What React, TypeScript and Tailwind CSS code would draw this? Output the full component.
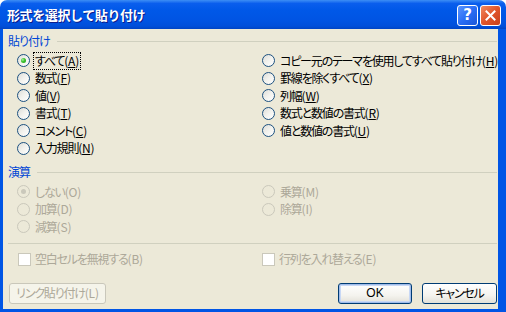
import React from "react";

const FONT = "[font-family:'Noto_Sans_CJK_JP','Noto_Sans',sans-serif] [font-feature-settings:'palt']";

function Label({ text, acc, disabled }: { text: string; acc: string; disabled?: boolean }) {
  return (
    <span className={"whitespace-nowrap leading-none " + (disabled ? "text-[#ACA899]" : "text-black")}>
      <span className="tracking-[-1.2px]">{text}</span>
      <span className="tracking-[-0.2px]">
        (
        {disabled ? acc : <span className="underline underline-offset-[1px]">{acc}</span>})
      </span>
    </span>
  );
}

function Radio({ checked, disabled }: { checked?: boolean; disabled?: boolean }) {
  if (disabled) {
    return (
      <span className="relative w-[13px] h-[13px] shrink-0 rounded-full border border-[#CAC8BB] bg-[#ECE9D8] flex items-center justify-center">
        {checked && <span className="w-[5px] h-[5px] rounded-full bg-[#CAC8BB]" />}
      </span>
    );
  }
  return (
    <span className="relative w-[13px] h-[13px] shrink-0 rounded-full border border-[#1C5180] bg-[linear-gradient(135deg,#DCDCD7_0%,#F2F2EE_50%,#FFFFFF_100%)] flex items-center justify-center">
      {checked && (
        <span className="w-[5px] h-[5px] rounded-full bg-[radial-gradient(circle_at_35%_35%,#A8F0A0_0%,#38C028_45%,#21A121_100%)]" />
      )}
    </span>
  );
}

function RadioRow({
  text,
  acc,
  checked,
  disabled,
  focus,
}: {
  text: string;
  acc: string;
  checked?: boolean;
  disabled?: boolean;
  focus?: boolean;
}) {
  return (
    <div className="h-[17.5px] flex items-center">
      <Radio checked={checked} disabled={disabled} />
      <span
        className={
          "ml-[3px] pl-[1px] pr-[1px] py-[2px] flex items-center " +
          (focus ? "border border-dotted border-black" : "border border-transparent")
        }
      >
        <Label text={text} acc={acc} disabled={disabled} />
      </span>
    </div>
  );
}

function CheckRow({ text, acc }: { text: string; acc: string }) {
  return (
    <div className="h-[15px] flex items-center">
      <span className="w-[13px] h-[13px] shrink-0 border border-[#CAC8BB] bg-white" />
      <span className="ml-[4px]">
        <Label text={text} acc={acc} disabled />
      </span>
    </div>
  );
}

function GroupHeader({ title }: { title: string }) {
  return (
    <div className="h-[12px] flex items-center pl-[5px] pr-[1px]">
      <span className="text-[#0046D5] leading-none whitespace-nowrap tracking-[-1px]">{title}</span>
      <span className="ml-[7px] flex-1 h-px bg-[#D0D0BF]" />
    </div>
  );
}

export default function App() {
  return (
    <div className={"w-[506px] h-[312px] flex flex-col text-[12px] " + FONT}>
      {/* Title bar */}
      <div className="h-[29px] shrink-0 rounded-t-[7px] flex items-center pl-[7px] pr-[5px] bg-[linear-gradient(to_bottom,#3D8EF5_0%,#0A5EED_12%,#0058E8_35%,#0054E3_70%,#004FDA_90%,#0044C4_100%)]">
        <span className="text-white font-bold text-[13px] tracking-[-0.4px] [text-shadow:1px_1px_0_#0A1D8C] [font-feature-settings:normal]">
          形式を選択して貼り付け
        </span>
        <div className="flex-1" />
        <div className="flex gap-[2px] mt-[1px]">
          <div className="w-[21px] h-[21px] rounded-[3px] border border-white bg-[linear-gradient(135deg,#5A95FF_0%,#2A6EF5_50%,#1A55D8_100%)] flex items-center justify-center">
            <span className="text-white font-bold text-[15px] leading-none [font-family:'DejaVu_Sans',sans-serif]">?</span>
          </div>
          <div className="w-[21px] h-[21px] rounded-[3px] border border-white bg-[linear-gradient(135deg,#F08A60_0%,#E0552A_50%,#C8401C_100%)] flex items-center justify-center">
            <svg width="11" height="11" viewBox="0 0 11 11">
              <path d="M1.5 1.5 L9.5 9.5 M9.5 1.5 L1.5 9.5" stroke="white" strokeWidth="2" strokeLinecap="square" />
            </svg>
          </div>
        </div>
      </div>

      {/* Frame */}
      <div className="flex-1 flex flex-col bg-[#0055E5] pl-[3px] pr-[8px] pb-[3px]">
        <div className="flex-1 bg-[#ECE9D8] flex flex-col pt-[6px]">
          <GroupHeader title="貼り付け" />
          <div className="mt-[5px] pl-[14px] grid grid-cols-[245px_1fr]">
            <div className="flex flex-col">
              <RadioRow text="すべて" acc="A" checked focus />
              <RadioRow text="数式" acc="F" />
              <RadioRow text="値" acc="V" />
              <RadioRow text="書式" acc="T" />
              <RadioRow text="コメント" acc="C" />
              <RadioRow text="入力規則" acc="N" />
            </div>
            <div className="flex flex-col">
              <RadioRow text="コピー元のテーマを使用してすべて貼り付け" acc="H" />
              <RadioRow text="罫線を除くすべて" acc="X" />
              <RadioRow text="列幅" acc="W" />
              <RadioRow text="数式と数値の書式" acc="R" />
              <RadioRow text="値と数値の書式" acc="U" />
            </div>
          </div>

          <div className="mt-[9px]">
            <GroupHeader title="演算" />
          </div>
          <div className="mt-[5px] pl-[14px] grid grid-cols-[245px_1fr]">
            <div className="flex flex-col">
              <RadioRow text="しない" acc="O" checked disabled />
              <RadioRow text="加算" acc="D" disabled />
              <RadioRow text="減算" acc="S" disabled />
            </div>
            <div className="flex flex-col">
              <RadioRow text="乗算" acc="M" disabled />
              <RadioRow text="除算" acc="I" disabled />
            </div>
          </div>

          <div className="mt-[7px] ml-[5px] mr-[1px] h-px bg-[#D0D0BF]" />

          <div className="mt-[8px] pl-[15px] grid grid-cols-[244px_1fr]">
            <CheckRow text="空白セルを無視する" acc="B" />
            <CheckRow text="行列を入れ替える" acc="E" />
          </div>

          <div className="mt-[16px] flex items-center pl-[6px] pr-[1px]">
            <div className="w-[97px] h-[21px] rounded-[3px] border border-[#C9C7BA] bg-[#F5F4EA] flex items-center justify-center">
              <span className="text-[#ACA899] leading-none">
                <span className="tracking-[-1.2px]">リンク貼り付け</span>
                <span className="tracking-[-0.2px]">(L)</span>
              </span>
            </div>
            <div className="flex-1" />
            <div className="w-[74px] h-[21px] rounded-[3px] border border-[#003C74] bg-[linear-gradient(to_bottom,#FFFFFF_0%,#F4F3EE_60%,#E3E1D8_100%)] shadow-[inset_0_0_0_1px_#A0BCEA,inset_0_0_0_2px_#C8D8F5] flex items-center justify-center">
              <span className="text-black leading-none [font-family:'Liberation_Sans',sans-serif]">OK</span>
            </div>
            <div className="ml-[10px] w-[75px] h-[21px] rounded-[3px] border border-[#003C74] bg-[linear-gradient(to_bottom,#FFFFFF_0%,#F4F3EE_60%,#E3E1D8_100%)] flex items-center justify-center">
              <span className="text-black leading-none tracking-[-1.2px]">キャンセル</span>
            </div>
          </div>
        </div>
      </div>
    </div>
  );
}
